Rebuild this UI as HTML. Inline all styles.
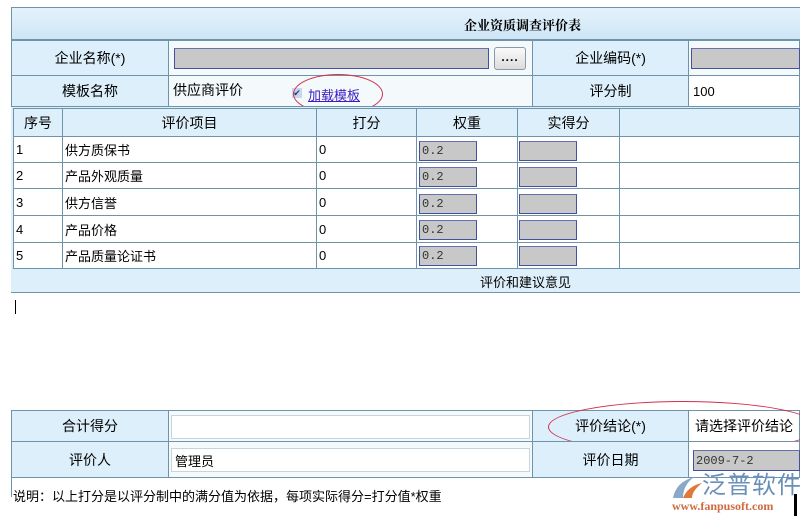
<!DOCTYPE html>
<html><head><meta charset="utf-8"><style>
*{margin:0;padding:0;box-sizing:border-box}
body{width:800px;height:518px;background:#fff;position:relative;overflow:hidden;font-family:"Liberation Sans","Noto Sans CJK SC",sans-serif;font-size:14px;color:#000;white-space:nowrap}
.a{position:absolute}
.lb{position:absolute;background:#dcefFa;border:1px solid #6f93a8;display:flex;align-items:center;justify-content:center}
.c{position:absolute;background:#fff;border:1px solid #6f93a8;display:flex;align-items:center;padding-left:2px;font-size:13px}
.in{position:absolute;background:#fff;border:1px solid #c8d4dc;font-size:13px;display:flex;align-items:center;padding-left:3px}
.g{position:absolute;background:#c8c8c8;border:1px solid #4450a0;border-top-color:#6670b0;font-size:12px;display:flex;align-items:center;padding-left:2px;font-family:"Liberation Mono",monospace;color:#333}
</style></head><body>
<div class="a" style="left:11px;top:7px;width:789px;height:490px;border-left:1px solid #6f93a8;border-top:1px solid #6f93a8"></div>
<div class="a" style="left:12px;top:8px;width:788px;height:32px;background:linear-gradient(#e4f2fb,#cfe6f6);border-bottom:1px solid #6f93a8;font-weight:bold;font-size:13px;padding-left:452px;padding-top:7px;font-family:'Noto Serif CJK SC',serif">企业资质调查评价表</div>
<!-- row1 -->
<div class="lb" style="left:11px;top:40px;width:158px;height:36px">企业名称(*)</div>
<div class="c" style="left:168px;top:40px;width:365px;height:36px;background:#f4f9fc"></div>
<div class="g" style="left:174px;top:48px;width:315px;height:21px"></div>
<div class="a" style="left:494px;top:47px;width:32px;height:23px;border:1px solid #8a9aa8;border-radius:3px;background:linear-gradient(#fafafa,#dcdcdc);text-align:center;font-weight:bold;line-height:18px;font-size:12px;letter-spacing:1px">....</div>
<div class="lb" style="left:532px;top:40px;width:157px;height:36px">企业编码(*)</div>
<div class="c" style="left:688px;top:40px;width:112px;height:36px;background:#f4f9fc"></div>
<div class="g" style="left:691px;top:48px;width:109px;height:21px"></div>
<!-- row2 -->
<div class="lb" style="left:11px;top:75px;width:158px;height:32px">模板名称</div>
<div class="c" style="left:168px;top:75px;width:365px;height:32px;background:#f4f9fc"></div>
<div class="a" style="left:173px;top:80px;font-size:14px">供应商评价</div>
<div class="a" style="left:292px;top:88px;width:10px;height:10px;background:#c8d8ec;color:#1a3a8a;font-size:9px;line-height:10px;text-align:center">✔</div>
<div class="a" style="left:308px;top:85px;color:#3a1ec0;text-decoration:underline;font-size:13px">加载模板</div>
<div class="a" style="left:293px;top:74px;width:90px;height:40px;border:1px solid #d03050;border-radius:50%"></div>
<div class="lb" style="left:532px;top:75px;width:157px;height:32px">评分制</div>
<div class="c" style="left:688px;top:75px;width:112px;height:32px;padding-left:4px">100</div>
<!-- table header -->
<div class="a" style="left:11px;top:106px;width:789px;height:186px;background:#dcefFa;border-top:1px solid #6f93a8"></div>
<div class="lb" style="left:13px;top:108px;width:50px;height:29px">序号</div>
<div class="lb" style="left:62px;top:108px;width:255px;height:29px">评价项目</div>
<div class="lb" style="left:316px;top:108px;width:101px;height:29px">打分</div>
<div class="lb" style="left:416px;top:108px;width:102px;height:29px">权重</div>
<div class="lb" style="left:517px;top:108px;width:103px;height:29px">实得分</div>
<div class="lb" style="left:619px;top:108px;width:181px;height:29px"></div>
<!-- rows -->
<div class="c" style="left:13px;top:136px;width:50px;height:27px">1</div><div class="c" style="left:62px;top:136px;width:255px;height:27px">供方质保书</div><div class="c" style="left:316px;top:136px;width:101px;height:27px">0</div><div class="c" style="left:416px;top:136px;width:102px;height:27px"></div><div class="c" style="left:517px;top:136px;width:103px;height:27px"></div><div class="c" style="left:619px;top:136px;width:181px;height:27px"></div>
<div class="c" style="left:13px;top:162px;width:50px;height:27px">2</div><div class="c" style="left:62px;top:162px;width:255px;height:27px">产品外观质量</div><div class="c" style="left:316px;top:162px;width:101px;height:27px">0</div><div class="c" style="left:416px;top:162px;width:102px;height:27px"></div><div class="c" style="left:517px;top:162px;width:103px;height:27px"></div><div class="c" style="left:619px;top:162px;width:181px;height:27px"></div>
<div class="c" style="left:13px;top:188px;width:50px;height:28px">3</div><div class="c" style="left:62px;top:188px;width:255px;height:28px">供方信誉</div><div class="c" style="left:316px;top:188px;width:101px;height:28px">0</div><div class="c" style="left:416px;top:188px;width:102px;height:28px"></div><div class="c" style="left:517px;top:188px;width:103px;height:28px"></div><div class="c" style="left:619px;top:188px;width:181px;height:28px"></div>
<div class="c" style="left:13px;top:215px;width:50px;height:28px">4</div><div class="c" style="left:62px;top:215px;width:255px;height:28px">产品价格</div><div class="c" style="left:316px;top:215px;width:101px;height:28px">0</div><div class="c" style="left:416px;top:215px;width:102px;height:28px"></div><div class="c" style="left:517px;top:215px;width:103px;height:28px"></div><div class="c" style="left:619px;top:215px;width:181px;height:28px"></div>
<div class="c" style="left:13px;top:242px;width:50px;height:27px">5</div><div class="c" style="left:62px;top:242px;width:255px;height:27px">产品质量论证书</div><div class="c" style="left:316px;top:242px;width:101px;height:27px">0</div><div class="c" style="left:416px;top:242px;width:102px;height:27px"></div><div class="c" style="left:517px;top:242px;width:103px;height:27px"></div><div class="c" style="left:619px;top:242px;width:181px;height:27px"></div>
<div class="g" style="left:419px;top:141px;width:58px;height:20px">0.2</div><div class="g" style="left:519px;top:141px;width:58px;height:20px"></div>
<div class="g" style="left:419px;top:167px;width:58px;height:20px">0.2</div><div class="g" style="left:519px;top:167px;width:58px;height:20px"></div>
<div class="g" style="left:419px;top:194px;width:58px;height:20px">0.2</div><div class="g" style="left:519px;top:194px;width:58px;height:20px"></div>
<div class="g" style="left:419px;top:220px;width:58px;height:20px">0.2</div><div class="g" style="left:519px;top:220px;width:58px;height:20px"></div>
<div class="g" style="left:419px;top:246px;width:58px;height:20px">0.2</div><div class="g" style="left:519px;top:246px;width:58px;height:20px"></div>
<div class="a" style="left:480px;top:272px;font-size:13px">评价和建议意见</div>
<div class="a" style="left:11px;top:292px;width:789px;height:119px;background:#fff;border-top:1px solid #6f93a8;border-bottom:1px solid #6f93a8"></div>
<div class="a" style="left:15px;top:300px;width:1px;height:14px;background:#000"></div>
<!-- bottom rows -->
<div class="lb" style="left:11px;top:410px;width:158px;height:32px">合计得分</div>
<div class="c" style="left:168px;top:410px;width:365px;height:32px;background:#f4f9fc"></div>
<div class="in" style="left:171px;top:415px;width:359px;height:24px"></div>
<div class="lb" style="left:532px;top:410px;width:157px;height:32px">评价结论(*)</div>
<div class="c" style="left:688px;top:410px;width:112px;height:32px;font-size:14px;padding-left:6px">请选择评价结论</div>
<div class="a" style="left:548px;top:401px;width:270px;height:52px;border:1px solid #d03050;border-radius:50%"></div>
<div class="lb" style="left:11px;top:441px;width:158px;height:37px">评价人</div>
<div class="c" style="left:168px;top:441px;width:365px;height:37px;background:#f4f9fc"></div>
<div class="in" style="left:171px;top:448px;width:359px;height:24px;align-items:flex-start;padding-top:2px">管理员</div>
<div class="lb" style="left:532px;top:441px;width:157px;height:37px">评价日期</div>
<div class="c" style="left:688px;top:441px;width:112px;height:37px"></div>
<div class="g" style="left:693px;top:450px;width:107px;height:21px">2009-7-2</div>
<div class="a" style="left:13px;top:486px;font-size:13px">说明：以上打分是以评分制中的满分值为依据，每项实际得分=打分值*权重</div>
<!-- logo -->
<svg class="a" style="left:670px;top:474px" width="34" height="26" viewBox="0 0 34 26"><path d="M3 24 Q6 8 24 3 Q13 11 13 24Z" fill="#8aa8c8"/><path d="M13 24 Q18 12 32 9 Q22 17 22 24Z" fill="#e07838"/></svg>
<div class="a" style="left:702px;top:473px;font-size:24px;line-height:26px;color:#6a90b8;letter-spacing:1px">泛普软件</div>
<div class="a" style="left:672px;top:499px;font-size:12px;color:#d06a40;font-family:'Liberation Serif',serif;font-weight:bold">www.fanpusoft.com</div>
<div class="a" style="left:794px;top:494px;width:3px;height:22px;background:#000"></div>
</body></html>
